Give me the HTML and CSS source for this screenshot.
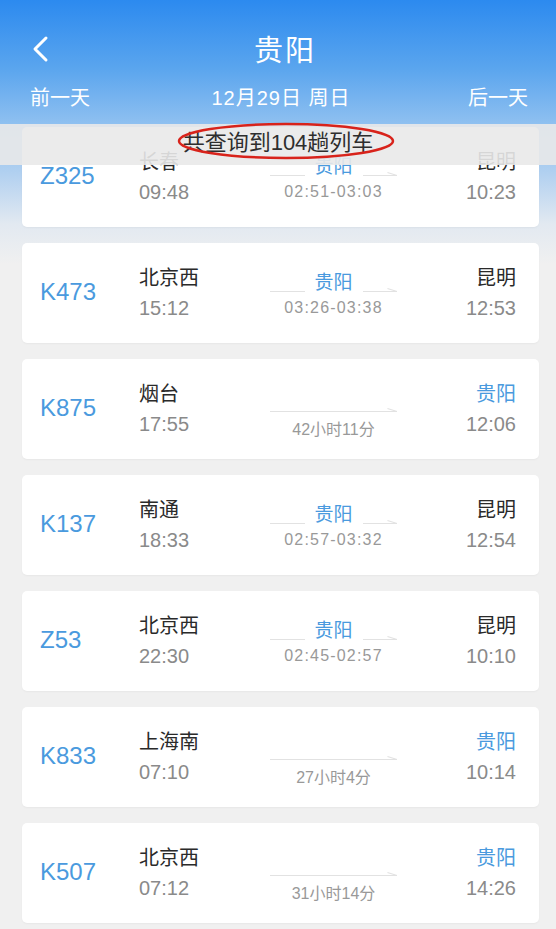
FILE: index.html
```html
<!DOCTYPE html>
<html lang="zh-CN">
<head>
    <meta charset="UTF-8">
    <meta name="viewport" content="width=device-width, initial-scale=1.0">
    <title>贵阳</title>
    <link rel="stylesheet" href="styles.css">
</head>
<body>
    <div class="header">
        <div class="top-row">
            <svg class="back" width="20" height="30" viewBox="0 0 20 30">
                <polyline points="15,4 4,15 15,26" fill="none" stroke="#fff" stroke-width="3" stroke-linecap="round" stroke-linejoin="round"/>
            </svg>
            <span class="title">贵阳</span>
        </div>
        <div class="date-row">
            <span>前一天</span>
            <span class="date">12月29日 周日</span>
            <span>后一天</span>
        </div>
    </div>

    <div class="list">
        <div class="count-bar">
            共查询到104趟列车
            <svg class="circle" width="220" height="40" viewBox="0 0 220 40">
                <ellipse cx="110" cy="19" rx="107" ry="17" fill="none" stroke="#d8231b" stroke-width="2.5"/>
            </svg>
        </div>

        <div class="card">
            <div class="no">Z325</div>
            <div class="side"><span class="st">长春</span><span class="tm">09:48</span></div>
            <div class="mid">
                <div class="via-row"><span class="line"></span><span class="via">贵阳</span><span class="line arrow"></span></div>
                <div class="stay">02:51-03:03</div>
            </div>
            <div class="side right"><span class="st">昆明</span><span class="tm">10:23</span></div>
        </div>

        <div class="card">
            <div class="no">K473</div>
            <div class="side"><span class="st">北京西</span><span class="tm">15:12</span></div>
            <div class="mid">
                <div class="via-row"><span class="line"></span><span class="via">贵阳</span><span class="line arrow"></span></div>
                <div class="stay">03:26-03:38</div>
            </div>
            <div class="side right"><span class="st">昆明</span><span class="tm">12:53</span></div>
        </div>

        <div class="card">
            <div class="no">K875</div>
            <div class="side"><span class="st">烟台</span><span class="tm">17:55</span></div>
            <div class="mid direct">
                <span class="line arrow"></span>
                <div class="dur">42小时11分</div>
            </div>
            <div class="side right"><span class="st blue">贵阳</span><span class="tm">12:06</span></div>
        </div>

        <div class="card">
            <div class="no">K137</div>
            <div class="side"><span class="st">南通</span><span class="tm">18:33</span></div>
            <div class="mid">
                <div class="via-row"><span class="line"></span><span class="via">贵阳</span><span class="line arrow"></span></div>
                <div class="stay">02:57-03:32</div>
            </div>
            <div class="side right"><span class="st">昆明</span><span class="tm">12:54</span></div>
        </div>

        <div class="card">
            <div class="no">Z53</div>
            <div class="side"><span class="st">北京西</span><span class="tm">22:30</span></div>
            <div class="mid">
                <div class="via-row"><span class="line"></span><span class="via">贵阳</span><span class="line arrow"></span></div>
                <div class="stay">02:45-02:57</div>
            </div>
            <div class="side right"><span class="st">昆明</span><span class="tm">10:10</span></div>
        </div>

        <div class="card">
            <div class="no">K833</div>
            <div class="side"><span class="st">上海南</span><span class="tm">07:10</span></div>
            <div class="mid direct">
                <span class="line arrow"></span>
                <div class="dur">27小时4分</div>
            </div>
            <div class="side right"><span class="st blue">贵阳</span><span class="tm">10:14</span></div>
        </div>

        <div class="card">
            <div class="no">K507</div>
            <div class="side"><span class="st">北京西</span><span class="tm">07:12</span></div>
            <div class="mid direct">
                <span class="line arrow"></span>
                <div class="dur">31小时14分</div>
            </div>
            <div class="side right"><span class="st blue">贵阳</span><span class="tm">14:26</span></div>
        </div>
    </div>
</body>
</html>
```

FILE: styles.css
```css
/* Page */
body {
    margin: 0;
    width: 556px;
    height: 929px;
    overflow: hidden;
    background: #f0f0f0;
    font-family: "Liberation Sans", "Noto Sans CJK SC", sans-serif;
    color: #333;
}

/* Header */
.header {
    height: 124px;
    box-sizing: border-box;
    padding-top: 28px;
    background: linear-gradient(180deg, #2c8aef 0%, #5aa5ee 55%, #8fc0f0 100%);
    color: #fff;
}

.top-row {
    position: relative;
    height: 40px;
    display: flex;
    justify-content: center;
    align-items: center;
}

.back {
    position: absolute;
    left: 31px;
    top: 6px;
}

.title {
    font-size: 29px;
    letter-spacing: 2px;
    margin-left: 14px;
}

.date-row {
    margin-top: 16px;
    height: 24px;
    padding: 0 28px 0 30px;
    display: flex;
    justify-content: space-between;
    align-items: center;
    font-size: 20px;
}

.date {
    letter-spacing: 1px;
    margin-left: 4px;
}

/* List */
.list {
    position: relative;
    padding: 3px 17px 0 22px;
    background: linear-gradient(180deg, #98c3ef 0, #a9ccf0 40px, #e2e9f1 100px, #f0f0f0 140px);
    display: flex;
    flex-direction: column;
    gap: 16px;
}

.count-bar {
    position: absolute;
    top: 0;
    left: 0;
    right: 0;
    height: 41px;
    line-height: 38px;
    text-align: center;
    font-size: 22px;
    color: #2e2e2e;
    background: rgba(233, 233, 233, 0.9);
    z-index: 2;
}

.circle {
    position: absolute;
    left: 176px;
    top: -2px;
}

/* Cards */
.card {
    height: 100px;
    box-sizing: border-box;
    padding: 0 23px 0 18px;
    background: #fff;
    border-radius: 5px;
    box-shadow: 0 1px 2px rgba(0, 0, 0, 0.04);
    display: grid;
    grid-template-columns: 99px 131px 127px 1fr;
}

.no {
    align-self: center;
    margin-top: -2px;
    font-size: 24px;
    color: #4a9ade;
}

.side {
    display: flex;
    flex-direction: column;
    padding-top: 21px;
}

.side.right {
    align-items: flex-end;
}

.st {
    height: 28px;
    line-height: 28px;
    font-size: 20px;
    color: #2a2a2a;
}

.st.blue {
    color: #4a9ade;
}

.tm {
    margin-top: 2px;
    height: 28px;
    line-height: 28px;
    font-size: 20px;
    color: #8a8a8a;
}

.mid {
    padding-top: 28px;
    display: flex;
    flex-direction: column;
}

.via-row {
    height: 24px;
    display: flex;
    align-items: flex-start;
}

.via {
    padding: 0 10px;
    line-height: 24px;
    font-size: 19px;
    color: #4a9ade;
}

.line {
    position: relative;
    flex: 1;
    height: 1px;
    margin-top: 20px;
    background: #e2e2e2;
}

.arrow::after {
    content: "";
    position: absolute;
    right: 0;
    top: 0;
    width: 10px;
    height: 1px;
    background: #e2e2e2;
    transform-origin: right center;
    transform: rotate(18deg);
}

.stay {
    margin-top: 3px;
    line-height: 20px;
    text-align: center;
    font-size: 16px;
    letter-spacing: 1.2px;
    color: #999;
}

.mid.direct {
    padding-top: 52px;
}

.mid.direct .line {
    flex: none;
    margin-top: 0;
}

.dur {
    margin-top: 8px;
    line-height: 20px;
    text-align: center;
    font-size: 16px;
    color: #999;
}
```
